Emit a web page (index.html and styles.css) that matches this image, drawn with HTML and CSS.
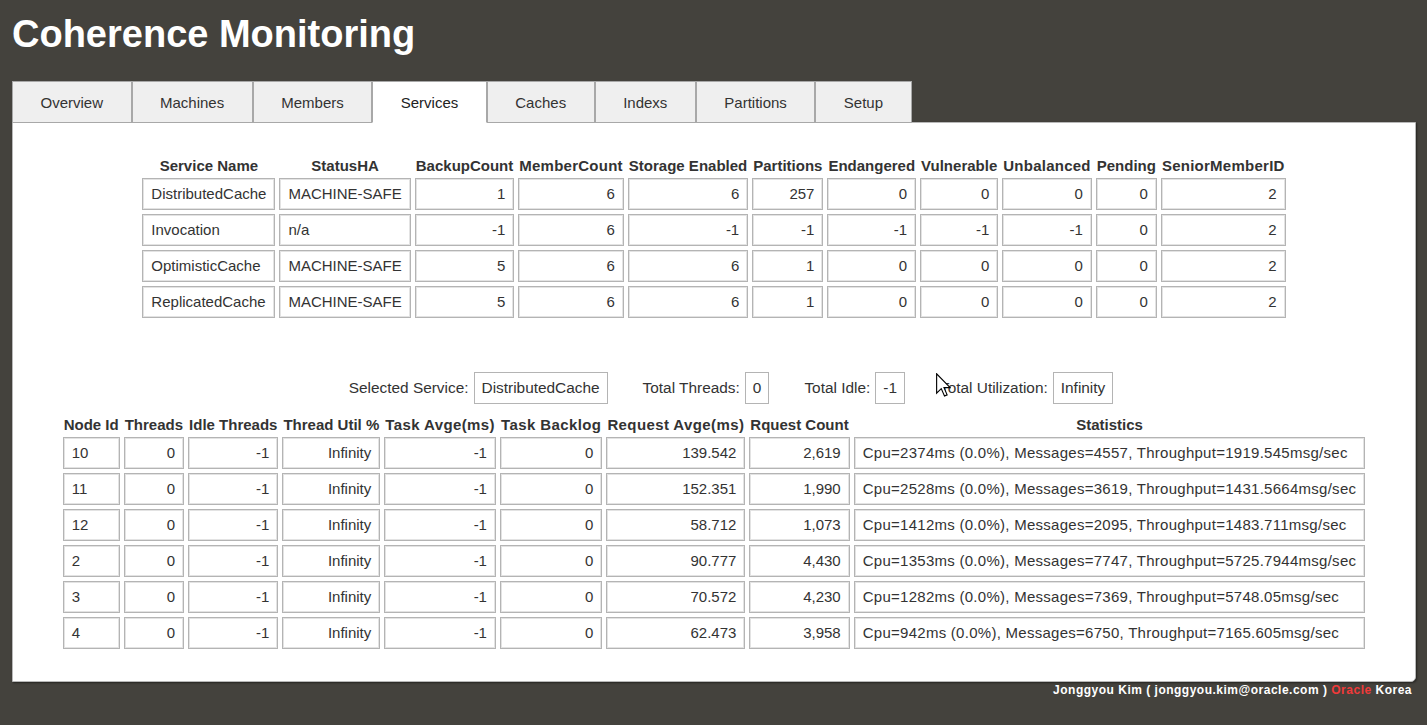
FILE: index.html
```html
<!DOCTYPE html>
<html lang="en">
<head>
<meta charset="utf-8">
<title>Coherence Monitoring</title>
<link rel="stylesheet" href="styles.css">
</head>
<body>
<header class="top">
  <h1 class="title">Coherence Monitoring</h1>
</header>
<nav class="tabs">
  <a class="tab">Overview</a>
  <a class="tab">Machines</a>
  <a class="tab">Members</a>
  <a class="tab active">Services</a>
  <a class="tab">Caches</a>
  <a class="tab">Indexs</a>
  <a class="tab">Partitions</a>
  <a class="tab">Setup</a>
</nav>
<main class="panel">
  <table class="grid">
    <thead>
      <tr>
        <th>Service Name</th><th>StatusHA</th><th>BackupCount</th><th class="wide">MemberCount</th><th>Storage Enabled</th><th>Partitions</th><th>Endangered</th><th>Vulnerable</th><th class="wide">Unbalanced</th><th>Pending</th><th class="wide">SeniorMemberID</th>
      </tr>
    </thead>
    <tbody>
      <tr><td>DistributedCache</td><td>MACHINE-SAFE</td><td class="num">1</td><td class="num">6</td><td class="num">6</td><td class="num">257</td><td class="num">0</td><td class="num">0</td><td class="num">0</td><td class="num">0</td><td class="num">2</td></tr>
      <tr><td>Invocation</td><td>n/a</td><td class="num">-1</td><td class="num">6</td><td class="num">-1</td><td class="num">-1</td><td class="num">-1</td><td class="num">-1</td><td class="num">-1</td><td class="num">0</td><td class="num">2</td></tr>
      <tr><td>OptimisticCache</td><td>MACHINE-SAFE</td><td class="num">5</td><td class="num">6</td><td class="num">6</td><td class="num">1</td><td class="num">0</td><td class="num">0</td><td class="num">0</td><td class="num">0</td><td class="num">2</td></tr>
      <tr><td>ReplicatedCache</td><td>MACHINE-SAFE</td><td class="num">5</td><td class="num">6</td><td class="num">6</td><td class="num">1</td><td class="num">0</td><td class="num">0</td><td class="num">0</td><td class="num">0</td><td class="num">2</td></tr>
    </tbody>
  </table>

  <div class="info">
    <div class="field"><span class="label">Selected Service:</span><span class="value">DistributedCache</span></div>
    <div class="field"><span class="label">Total Threads:</span><span class="value">0</span></div>
    <div class="field"><span class="label">Total Idle:</span><span class="value">-1</span></div>
    <div class="field"><span class="label">Total Utilization:</span><span class="value">Infinity</span></div>
  </div>

  <table class="grid threads">
    <thead>
      <tr>
        <th>Node Id</th><th>Threads</th><th>Idle Threads</th><th>Thread Util %</th><th class="wider">Task Avge(ms)</th><th class="wider">Task Backlog</th><th class="wider">Request Avge(ms)</th><th>Rquest Count</th><th>Statistics</th>
      </tr>
    </thead>
    <tbody>
      <tr><td>10</td><td class="num">0</td><td class="num">-1</td><td class="num">Infinity</td><td class="num">-1</td><td class="num">0</td><td class="num">139.542</td><td class="num">2,619</td><td class="stats">Cpu=2374ms (0.0%), Messages=4557, Throughput=1919.545msg/sec</td></tr>
      <tr><td>11</td><td class="num">0</td><td class="num">-1</td><td class="num">Infinity</td><td class="num">-1</td><td class="num">0</td><td class="num">152.351</td><td class="num">1,990</td><td class="stats">Cpu=2528ms (0.0%), Messages=3619, Throughput=1431.5664msg/sec</td></tr>
      <tr><td>12</td><td class="num">0</td><td class="num">-1</td><td class="num">Infinity</td><td class="num">-1</td><td class="num">0</td><td class="num">58.712</td><td class="num">1,073</td><td class="stats">Cpu=1412ms (0.0%), Messages=2095, Throughput=1483.711msg/sec</td></tr>
      <tr><td>2</td><td class="num">0</td><td class="num">-1</td><td class="num">Infinity</td><td class="num">-1</td><td class="num">0</td><td class="num">90.777</td><td class="num">4,430</td><td class="stats">Cpu=1353ms (0.0%), Messages=7747, Throughput=5725.7944msg/sec</td></tr>
      <tr><td>3</td><td class="num">0</td><td class="num">-1</td><td class="num">Infinity</td><td class="num">-1</td><td class="num">0</td><td class="num">70.572</td><td class="num">4,230</td><td class="stats">Cpu=1282ms (0.0%), Messages=7369, Throughput=5748.05msg/sec</td></tr>
      <tr><td>4</td><td class="num">0</td><td class="num">-1</td><td class="num">Infinity</td><td class="num">-1</td><td class="num">0</td><td class="num">62.473</td><td class="num">3,958</td><td class="stats">Cpu=942ms (0.0%), Messages=6750, Throughput=7165.605msg/sec</td></tr>
    </tbody>
  </table>
</main>
<footer class="credit">Jonggyou Kim ( jonggyou.kim@oracle.com ) <span class="oracle">Oracle</span> Korea</footer>

<svg class="cursor" width="15" height="24" viewBox="0 0 12 19" aria-hidden="true">
  <path d="M0.5 0.5 V16 L4.2 12.4 L6.8 18.3 L8.9 17.4 L6.4 11.6 H11.3 Z" fill="#fff" stroke="#000" stroke-width="0.9" stroke-linejoin="miter"/>
</svg>
</body>
</html>
```

FILE: styles.css
```css
html {
  background: #44423d;
}

body {
  margin: 0;
  min-height: 725px;
  background: #44423d;
  font-family: "Liberation Sans", Arial, sans-serif;
  color: #333;
  position: relative;
}

.top {
  padding: 12px 12px 0;
}

.title {
  margin: 0;
  font-size: 38px;
  line-height: 44px;
  font-weight: bold;
  color: #fff;
}

.tabs {
  display: flex;
  margin: 25px 0 -1px 12px;
  position: relative;
  z-index: 1;
}

.tab {
  display: block;
  padding: 1px 27.5px 0;
  line-height: 39px;
  font-size: 15px;
  color: #333;
  background: #efefef;
  border: 1px solid #a8a8a8;
}

.tab.active {
  background: #fff;
  color: #222;
  border-bottom-color: #fff;
}

.panel {
  display: block;
  margin: 0 11px 0 12px;
  padding: 30px 0 28px;
  background: #fff;
  border: 1px solid #b8b8b8;
  border-radius: 0 0 5px 0;
  box-shadow: 1px 1px 2px rgba(0, 0, 0, 0.45);
}

.grid {
  margin: 0 auto;
  border-collapse: separate;
  border-spacing: 4px;
}

.grid th {
  padding: 0 1px;
  font-size: 15px;
  line-height: 17px;
  font-weight: bold;
  color: #333;
  white-space: nowrap;
  text-align: center;
}

.grid th.wide {
  letter-spacing: 0.25px;
}

.grid th.wider {
  letter-spacing: 0.4px;
}

.grid td {
  padding: 6px 8px;
  font-size: 15px;
  line-height: 18px;
  color: #333;
  white-space: nowrap;
  text-align: left;
  border: 1px solid #b4b4b4;
  box-shadow: inset 0 0 0 1px #e3e3e3;
}

.grid td.num {
  text-align: right;
}

.grid td.stats {
  letter-spacing: 0.27px;
}

.info {
  display: flex;
  justify-content: center;
  gap: 35px;
  margin-top: 50px;
  padding-left: 34px;
}

.field {
  display: flex;
  align-items: center;
  gap: 5px;
}

.label {
  font-size: 15.4px;
  color: #333;
}

.value {
  font-size: 15.4px;
  line-height: 30px;
  padding: 0 7px;
  color: #333;
  border: 1px solid #b4b4b4;
}

.threads {
  margin-top: 8px;
}

.credit {
  margin-top: 1px;
  padding-right: 15px;
  text-align: right;
  font-size: 12px;
  line-height: 14px;
  font-weight: bold;
  letter-spacing: 0.5px;
  color: #fff;
}

.oracle {
  color: #f03a3a;
}

.cursor {
  position: absolute;
  left: 936px;
  top: 373px;
}
```
